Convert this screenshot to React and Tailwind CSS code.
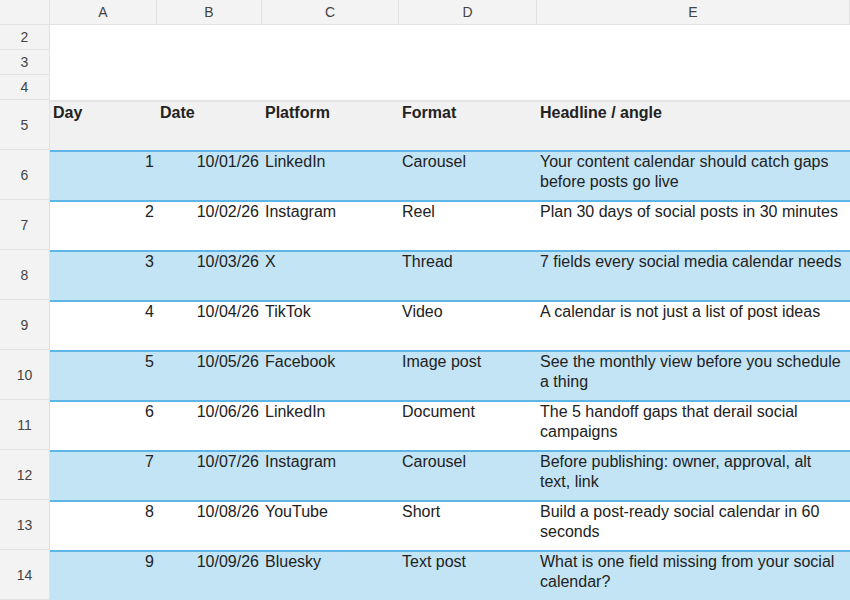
const rows = [
  [1, "10/01/26", "LinkedIn", "Carousel", "Your content calendar should catch gaps before posts go live"],
  [2, "10/02/26", "Instagram", "Reel", "Plan 30 days of social posts in 30 minutes"],
  [3, "10/03/26", "X", "Thread", "7 fields every social media calendar needs"],
  [4, "10/04/26", "TikTok", "Video", "A calendar is not just a list of post ideas"],
  [5, "10/05/26", "Facebook", "Image post", "See the monthly view before you schedule a thing"],
  [6, "10/06/26", "LinkedIn", "Document", "The 5 handoff gaps that derail social campaigns"],
  [7, "10/07/26", "Instagram", "Carousel", "Before publishing: owner, approval, alt text, link"],
  [8, "10/08/26", "YouTube", "Short", "Build a post-ready social calendar in 60 seconds"],
  [9, "10/09/26", "Bluesky", "Text post", "What is one field missing from your social calendar?"],
];

const cols = "grid grid-cols-[50px_107px_105px_137px_138px_1fr]";
const rh = "flex items-center justify-center bg-[#f3f3f3] border-r border-b border-[#e2e2e2] text-[14px] text-[#444]";

export default function App() {
  return (
    <div className="w-[850px] h-[600px] overflow-hidden bg-white text-[16px] leading-[20px] text-[#222]" style={{ fontFamily: '"Liberation Sans", Arial, sans-serif' }}>
      <div className={`${cols} h-[25px]`}>
        <div className="bg-[#f3f3f3] border-r border-b border-[#e2e2e2]" />
        {["A", "B", "C", "D", "E"].map((c) => (
          <div key={c} className="flex items-center justify-center bg-[#f3f3f3] border-r border-b border-[#e2e2e2] text-[14px] text-[#444]">{c}</div>
        ))}
      </div>
      {[2, 3, 4].map((n) => (
        <div key={n} className={`${cols} h-[25px]`}>
          <div className={rh}>{n}</div>
          <div className="col-span-5" />
        </div>
      ))}
      <div className={`${cols} h-[50px]`}>
        <div className={rh}>5</div>
        {["Day", "Date", "Platform", "Format", "Headline / angle"].map((h) => (
          <div key={h} className="bg-[#f1f1f1] border-t-2 border-[#e4e4e4] px-[3px] pt-[1px] font-bold">{h}</div>
        ))}
      </div>
      {rows.map((r, i) => {
        const bg = i % 2 === 0 ? "bg-[#c2e4f5]" : "bg-white";
        return (
          <div key={i} className={`${cols} h-[50px]`}>
            <div className={rh}>{i + 6}</div>
            <div className={`${bg} border-t-2 border-[#5db6e6] px-[3px] text-right`}>{r[0]}</div>
            <div className={`${bg} border-t-2 border-[#5db6e6] px-[3px] text-right`}>{r[1]}</div>
            <div className={`${bg} border-t-2 border-[#5db6e6] px-[3px]`}>{r[2]}</div>
            <div className={`${bg} border-t-2 border-[#5db6e6] px-[3px]`}>{r[3]}</div>
            <div className={`${bg} border-t-2 border-[#5db6e6] px-[3px] pr-2`}>{r[4]}</div>
          </div>
        );
      })}
    </div>
  );
}
